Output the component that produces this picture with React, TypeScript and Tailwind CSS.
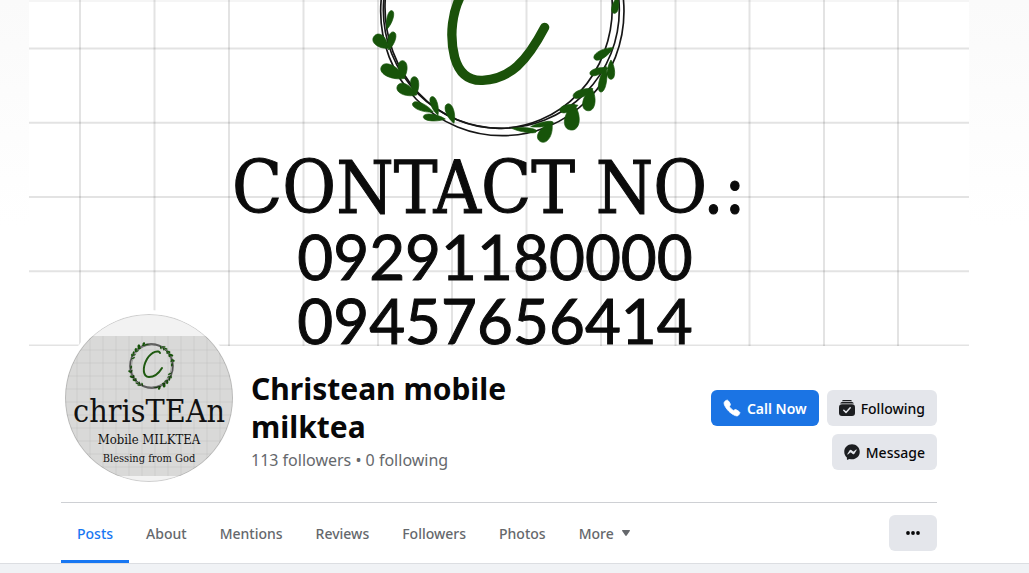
import { FaFacebookMessenger } from 'react-icons/fa6';
import { IoCall } from 'react-icons/io5';

const tabs = ['Posts', 'About', 'Mentions', 'Reviews', 'Followers', 'Photos'];

// base x, base y, tip x, tip y, width
const leaves = [
  [145, 145, 103, 108, 34],
  [146, 150, 161, 96, 22],
  [141, 88, 156, 32, 18],
  [195, 235, 124, 200, 36],
  [192, 234, 186, 182, 26],
  [230, 285, 172, 258, 32],
  [228, 285, 222, 230, 24],
  [280, 336, 218, 310, 22],
  [294, 346, 275, 290, 20],
  [316, 357, 250, 350, 20],
  [342, 370, 322, 312, 24],
  [515, 385, 590, 394, 14],
  [572, 380, 640, 368, 14],
  [636, 370, 600, 424, 36],
  [702, 312, 692, 390, 44],
  [714, 316, 660, 332, 22],
  [755, 264, 742, 332, 36],
  [759, 266, 700, 290, 22],
  [798, 198, 782, 276, 22],
  [804, 204, 750, 222, 20],
  [813, 180, 813, 238, 22],
  [820, 143, 763, 176, 24],
  [832, -8, 822, 40, 20],
];

const leafPath = ([x, y, tx, ty, w]: number[]) => {
  const dx = tx - x;
  const dy = ty - y;
  const len = Math.hypot(dx, dy);
  const nx = (-dy / len) * w * 0.67;
  const ny = (dx / len) * w * 0.67;
  return `M${x} ${y}C${x + dx * 0.4 + nx} ${y + dy * 0.4 + ny} ${tx + nx} ${ty + ny} ${tx} ${ty}C${tx - nx} ${ty - ny} ${x + dx * 0.4 - nx} ${y + dy * 0.4 - ny} ${x} ${y}`;
};

const Wreath = () => (
  <>
    <g fill="none" stroke="#161616" strokeWidth="5">
      <ellipse cx="487" cy="34" rx="365" ry="373" />
      <ellipse cx="476" cy="22" rx="341" ry="363" />
      <ellipse cx="484" cy="30" rx="354" ry="355" />
    </g>
    <g fill="#17540a" stroke="#17540a" strokeWidth="2" strokeLinejoin="round">
      {leaves.map((leaf) => (
        <path key={leaf.join()} d={leafPath(leaf)} />
      ))}
    </g>
  </>
);

const Cover = () => (
  <div className="relative h-[346px]">
    <svg className="absolute inset-y-0 left-1/2 h-full w-[940px] -translate-x-1/2" viewBox="0 0 940 346" aria-hidden="true">
      <rect width="940" height="346" fill="#fff" />
      <rect width="940" height="2" fill="#f5f5f5" />
      <g stroke="#000" strokeOpacity="0.11" strokeWidth="2">
        {[51, 125.5, 200, 274.5, 349, 423, 497.5, 572, 646.5, 720.5, 795, 869].map((x) => (
          <path key={x} d={`M${x} 0V346`} />
        ))}
        {[48.5, 122.7, 197, 271.3, 345.5].map((y) => (
          <path key={y} d={`M0 ${y}H940`} />
        ))}
      </g>
      <g transform="translate(311 0) scale(.3333)">
        <Wreath />
        <path
          d="M372 -30C334 30 328 110 344 172C358 222 388 243 428 241C510 237 560 185 614 82"
          fill="none"
          stroke="#1b520a"
          strokeWidth="28"
          strokeLinecap="round"
        />
      </g>
    </svg>
    <div className="relative flex flex-col items-center pt-[152px] pr-2 text-[#0b0b0b] [-webkit-text-stroke:1px_#0b0b0b]">
      <p className="pr-3 font-['DejaVu_Serif_Condensed','DejaVu_Serif',serif] text-[73px] leading-[72px] whitespace-nowrap">
        CONTACT NO.:
      </p>
      <p className="font-[Lato,sans-serif] text-[62px] leading-[64px]">09291180000</p>
      <p className="font-[Lato,sans-serif] text-[62px] leading-[64px]">09457656414</p>
    </div>
  </div>
);

const Avatar = () => (
  <div className="size-[176px] shrink-0 rounded-full bg-white p-1">
    <div className="relative size-full overflow-hidden rounded-full bg-[#f2f2f2]">
      <svg className="absolute inset-0 size-full" viewBox="0 0 168 168" aria-hidden="true">
        <rect y="22" width="168" height="140" fill="#d9d9d8" />
        <g stroke="#000" strokeOpacity="0.05">
          {[12, 25, 38, 51, 64, 77, 90, 103, 116, 129, 142, 155].map((x) => (
            <path key={x} d={`M${x} 22V162`} />
          ))}
          {[36, 49, 62, 75, 88, 101, 114, 127, 140, 153].map((y) => (
            <path key={y} d={`M0 ${y}H168`} />
          ))}
        </g>
        <g transform="translate(86.5 52) scale(.06) translate(-485 -32)">
          <Wreath />
          <g transform="rotate(180 485 32)">
            <Wreath />
          </g>
        </g>
        <path
          d="M95 39C94 36 87 37 82 45C77 54 78 63 84 63C90 63 94 59 97 54"
          fill="none"
          stroke="#1f5a10"
          strokeWidth="2"
          strokeLinecap="round"
        />
        <circle cx="84" cy="84" r="83.5" fill="none" stroke="#000" strokeOpacity="0.15" />
      </svg>
      <div className="relative flex flex-col items-center pt-[78px] font-['DejaVu_Serif_Condensed','DejaVu_Serif',serif] whitespace-nowrap text-[#111]">
        <p className="text-[32px] leading-[38px]">chrisTEAn</p>
        <p className="text-[13px] leading-[20px]">Mobile MILKTEA</p>
        <p className="text-[11px] leading-[18px]">Blessing from God</p>
      </div>
    </div>
  </div>
);

const FollowingIcon = () => (
  <svg className="size-4" viewBox="0 0 16 16" aria-hidden="true">
    <path d="M3 1.2C3.2.4 3.8 0 4.6 0h6.8c.8 0 1.4.4 1.6 1.2zM1.2 3.5C1.6 2.5 2.3 2 3.3 2h9.4c1 0 1.7.5 2.1 1.5z" fill="#1c1e21" />
    <rect y="4.2" width="16" height="11.8" rx="3" fill="#1c1e21" />
    <path d="M4.8 10.3l2.2 2.1 4.2-4.6" fill="none" stroke="#e4e6eb" strokeWidth="1.5" strokeLinecap="round" strokeLinejoin="round" />
  </svg>
);

const App = () => {
  return (
    <div className="min-h-screen bg-[#f0f2f5] font-['Noto_Sans',sans-serif]">
      <div className="border-b border-[#dcdee2] bg-white bg-linear-to-b from-[#fafafa] to-white to-40% pr-[31px]">
        <div className="mx-auto max-w-[940px]">
          <Cover />

          <div className="px-8">
            <div className="relative -mt-9 flex items-start border-b border-[#ced0d4] pb-4">
              <Avatar />
              <div className="ml-[14px] flex-1 pt-[60px]">
                <h1 className="max-w-xs text-[30px] leading-[38px] font-bold text-[#080809]">Christean mobile milktea</h1>
                <p className="text-[16px] leading-7 text-[#65686c]">113 followers • 0 following</p>
              </div>
              <div className="flex w-60 flex-wrap justify-end gap-2 pt-20 text-[14px] font-medium text-[#080809]">
                <button className="flex h-9 items-center gap-[6px] rounded-md bg-[#1b74e4] px-3 font-semibold text-white">
                  <IoCall className="size-[18px] stroke-white stroke-[24px]" />
                  Call Now
                </button>
                <button className="flex h-9 items-center gap-[6px] rounded-md bg-[#e4e6eb] px-3">
                  <FollowingIcon />
                  Following
                </button>
                <button className="flex h-9 items-center gap-[6px] rounded-md bg-[#e4e6eb] px-3">
                  <FaFacebookMessenger className="size-4 text-[#1c1e21]" />
                  Message
                </button>
              </div>
            </div>

            <div className="flex h-[60px] items-center justify-between">
              <nav className="flex h-full gap-px text-[14px] font-medium text-[#65686c]">
                {tabs.map((tab) => (
                  <a
                    key={tab}
                    href={`#${tab.toLowerCase()}`}
                    className={
                      tab === 'Posts'
                        ? 'flex items-center border-y-[3px] border-t-transparent border-b-[#1877f2] px-4 text-[#1877f2]'
                        : 'flex items-center px-4'
                    }
                  >
                    {tab}
                  </a>
                ))}
                <button className="flex items-center gap-2 px-4">
                  More
                  <svg className="h-[6px] w-2" viewBox="0 0 8 6" aria-hidden="true">
                    <path d="M.7 0h6.6c.7 0 .9.6.5 1.1L4.7 5.5c-.4.6-1 .6-1.4 0L.2 1.1C-.2.6 0 0 .7 0z" fill="#65686c" />
                  </svg>
                </button>
              </nav>
              <button aria-label="More options" className="flex h-9 w-12 items-center justify-center rounded-md bg-[#e4e6eb]">
                <svg className="h-1 w-[14px]" viewBox="0 0 14 4" aria-hidden="true">
                  <circle cx="2" cy="2" r="1.9" fill="#080809" />
                  <circle cx="7" cy="2" r="1.9" fill="#080809" />
                  <circle cx="12" cy="2" r="1.9" fill="#080809" />
                </svg>
              </button>
            </div>
          </div>
        </div>
      </div>
    </div>
  );
};

export default App;
